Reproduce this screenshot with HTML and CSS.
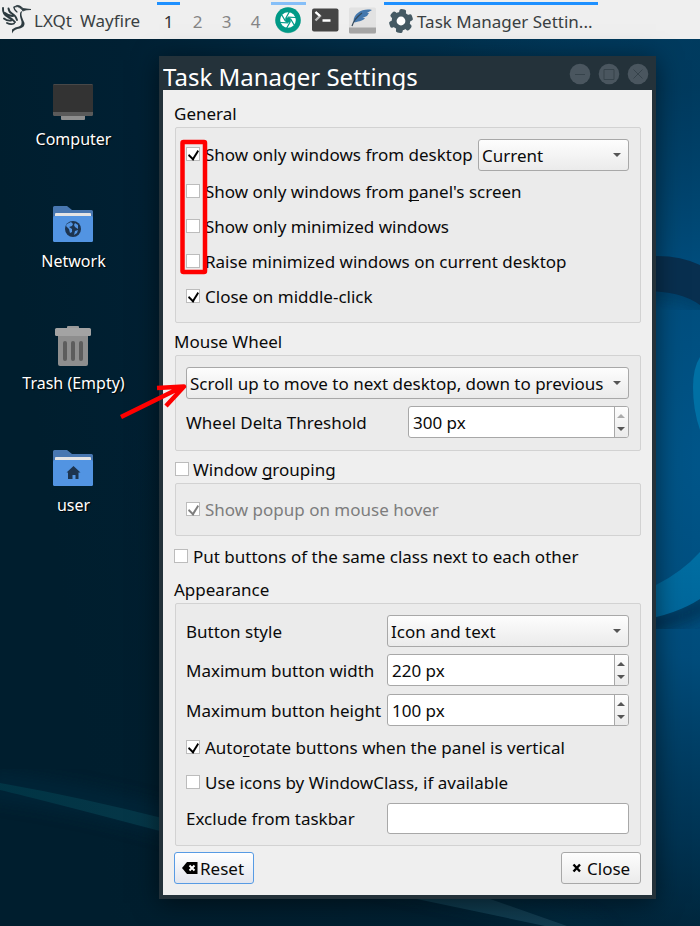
FILE: index.html
```html
<!DOCTYPE html>
<html lang="en">
<head>
<meta charset="utf-8">
<title>Desktop</title>
<link rel="stylesheet" href="styles.css">
</head>
<body>
<svg class="wallpaper" width="700" height="926" viewBox="0 0 700 926">
  <defs>
    <linearGradient id="sky" x1="0" y1="0.2" x2="1" y2="0">
      <stop offset="0" stop-color="#001e2e"/>
      <stop offset="0.2" stop-color="#002033"/>
      <stop offset="0.5" stop-color="#002c46"/>
      <stop offset="1" stop-color="#003c60"/>
    </linearGradient>
    <linearGradient id="floor" x1="0" y1="0" x2="0" y2="1">
      <stop offset="0.45" stop-color="#001e2e" stop-opacity="0"/>
      <stop offset="0.8" stop-color="#001e2e" stop-opacity=".85"/>
    </linearGradient>
    <radialGradient id="glow" gradientUnits="userSpaceOnUse" cx="720" cy="460" r="500">
      <stop offset="0" stop-color="#00568a"/>
      <stop offset="0.4" stop-color="#004c7b"/>
      <stop offset="0.75" stop-color="#003a5e" stop-opacity="0.75"/>
      <stop offset="1" stop-color="#003a5e" stop-opacity="0"/>
    </radialGradient>
    <linearGradient id="swirl" x1="0" y1="0" x2="0" y2="1">
      <stop offset="0" stop-color="#006ea2"/>
      <stop offset="1" stop-color="#00669a"/>
    </linearGradient>
    <linearGradient id="beam" x1="0" y1="0" x2="1" y2="0">
      <stop offset="0" stop-color="#003444"/>
      <stop offset="1" stop-color="#123c50"/>
    </linearGradient>
    <filter id="soft"><feGaussianBlur stdDeviation="8"/></filter>
  </defs>
  <rect width="700" height="926" fill="url(#sky)"/>
  <rect width="700" height="926" fill="url(#floor)"/>
  <rect width="700" height="926" fill="url(#glow)"/>
  <path d="M640 292Q680 290 710 308" fill="none" stroke="#00304f" stroke-width="12" opacity=".6" filter="url(#soft)"/>
  <path d="M640 257Q675 253 700 265V305Q680 290 640 291Z" fill="#082f4f"/>
  <path d="M700 357Q693 368 693 387Q693 410 700 430Z" fill="#0070a4"/>
  <path d="M640 626Q680 620 710 602" fill="none" stroke="#00263f" stroke-width="16" opacity=".7" filter="url(#soft)"/>
  <path d="M700 552Q682 572 656 585L640 592V620Q675 615 700 599Z" fill="url(#swirl)"/>
  <path d="M-10 785Q80 797 170 822T420 882T600 940" fill="none" stroke="#002f45" stroke-width="30" opacity=".4" filter="url(#soft)"/>
  <path d="M0 783Q80 797 170 820T490 899L567 926L545 926L417 899T160 831T0 795Z" fill="url(#beam)"/>
</svg>

<header class="panel">
  <svg class="bird" width="34" height="36" viewBox="0 0 34 36" fill="none" stroke="#2d3b40" stroke-linecap="round" stroke-linejoin="round">
    <path d="M14 7Q17 4 21 6.500L23 8.500L31 9.500Q25 9.500 23 11L21 8.500Q18 5.500 14 7Z" fill="#2d3b40" stroke-width=".8"/>
    <path d="M14 7Q14 10 17 12" stroke-width="1.200"/>
    <path d="M23 10.500Q20.500 12.500 22 17Q23 20 24.500 23Q25 27 20 28.500Q14 29 12 33.500V29.500Q15 27 19 26.500Q22 25.500 21.500 21.500Q19 15 20.500 12Z" fill="#2d3b40" stroke="none"/>
    <path d="M3 8Q2.500 14 8 17Q12 18.500 15 22M5 13Q8 16 13 16M8.500 8.500Q9 12 12 13.500Q16 16 17 20M4 18.500Q7 21 11 20.500M7 23Q11 25 14 23.500" stroke-width="1.900"/>
  </svg>
  <span class="menu">LXQt</span>
  <span class="menu second">Wayfire</span>
  <nav class="desks"><b>1</b><i>2</i><i>3</i><i>4</i></nav>
  <span class="task task-shot">
    <svg width="26" height="28" viewBox="0 0 26 28"><circle cx="13" cy="14.500" r="12.700" fill="#08917f" opacity=".45"/><circle cx="13" cy="14" r="12.700" fill="#009a87"/><circle cx="13" cy="14" r="7.800" fill="#fff"/><circle cx="13" cy="14" r="2.800" fill="#009a87"/><path d="M10.600 12.600L14.500 5.500M13 11.200L21 11.500M15.400 12.600L19.500 19.500M15.400 15.400L11.500 22.500M13 16.800L5 16.500M10.600 15.400L6.500 8.500" stroke="#009a87" stroke-width="1.200"/></svg>
  </span>
  <svg class="launch term" width="27" height="25" viewBox="0 0 27 25"><rect y=".500" width="26.500" height="23" rx="2" fill="#454545"/><path d="M3.500 4l4.500 4-4.500 4.500" fill="none" stroke="#bbb" stroke-width="2.300"/><path d="M3.500 4l4.500 4" stroke="#fff" stroke-width="2.300"/><path d="M10.500 12.500h8" stroke="#fff" stroke-width="2.500"/></svg>
  <svg class="launch" width="27" height="28" viewBox="0 0 27 28"><rect y="1.500" width="27" height="26" rx="1.500" fill="#e2e2e2"/><path d="M0 21.500h27v4.500q0 1.500-1.500 1.500h-24Q0 27.500 0 26z" fill="#a6a6a6"/><path d="M23 4C14 2 5 7 4.500 15L5.500 16.500C11 15 14 15 16 12L13.500 12L18 10L20 7L18 7Z" fill="#4377ad"/><path d="M3 20Q5 13 13 7" fill="none" stroke="#354a5c" stroke-width="1.200"/></svg>
  <span class="task task-active">
    <svg width="26" height="26" viewBox="-13 -13 26 26"><g fill="#455a64"><circle r="9.300"/><rect x="-3.400" y="-12" width="6.800" height="24" rx="2" transform="rotate(10)"/><rect x="-3.400" y="-12" width="6.800" height="24" rx="2" transform="rotate(70)"/><rect x="-3.400" y="-12" width="6.800" height="24" rx="2" transform="rotate(130)"/></g><circle r="4.400" fill="#fff"/></svg>
    <span>Task Manager Settin...</span>
  </span>
</header>

<main class="icons">
  <figure><svg width="40" height="40" viewBox="0 0 40 40"><rect x="8" y="31" width="24" height="5" rx="1" fill="#8e8e8e"/><rect width="40" height="32" rx="1.500" fill="#5a5a5a"/><path d="M0 28V1.500Q0 0 1.500 0h37Q40 0 40 1.500V28z" fill="#333"/><path d="M1 .500h38" stroke="#484848"/></svg><figcaption>Computer</figcaption></figure>
  <figure><svg width="40" height="40" viewBox="0 0 40 40"><path d="M0 10V1.500Q0 0 1.500 0H14l5 4h19.500Q40 4 40 5.500V12H0z" fill="#4877b1"/><rect x="2" y="7" width="36" height="6" rx="1" fill="#e4e4e4"/><rect y="10" width="40" height="26" rx="1.500" fill="#5294e2"/><circle cx="20" cy="23" r="8" fill="#1d344f"/><path d="M14 18l4-2 2 2-1 2-3 1 3 2v3l-2 1-1-4-3-3zM22 17l3 2v4l-3-2-1-2zM22 25l3-1-1 3-3 2z" fill="#5294e2"/></svg><figcaption>Network</figcaption></figure>
  <figure><svg class="trash" width="40" height="40" viewBox="0 0 40 40"><path d="M5 8h30v30q0 2-2 2H7q-2 0-2-2z" fill="#8e8e8e"/><rect x="14" y="0" width="12" height="4" rx="1" fill="#9a9a9a"/><rect x="2" y="2" width="36" height="8" rx="1.500" fill="#a3a3a3"/><path d="M12 17v16M20 17v16M28 17v16" stroke="#5d5d5d" stroke-width="4" stroke-linecap="round"/></svg><figcaption>Trash (Empty)</figcaption></figure>
  <figure><svg width="40" height="40" viewBox="0 0 40 40"><path d="M0 10V1.500Q0 0 1.500 0H14l5 4h19.500Q40 4 40 5.500V12H0z" fill="#4877b1"/><rect x="2" y="7" width="36" height="6" rx="1" fill="#e4e4e4"/><rect y="10" width="40" height="26" rx="1.500" fill="#5294e2"/><path d="M20.500 16l7 6.500h-2V29h-3v-4h-3v4h-4.500v-6.500h-1.500z" fill="#1d344f"/></svg><figcaption>user</figcaption></figure>
</main>

<section class="window">
  <div class="titlebar">
    <h1>Task Manager Settings</h1>
    <svg width="80" height="22" viewBox="0 0 80 22" fill="none" stroke="#36434b" stroke-width="1"><g fill="#4a565f" stroke="none"><circle cx="11" cy="11" r="10.300"/><circle cx="40" cy="11" r="10.300"/><circle cx="69" cy="11" r="10.300"/></g><path d="M6 11.500h10M35 6.500h10v10H35zM64.500 6.500l9 9M73.500 6.500l-9 9"/></svg>
  </div>
  <form class="body">
    <h2>General</h2>
    <div class="group general">
      <div class="row r1"><span class="box on"></span><span class="t">Show only windows from desktop</span><span class="combo">Current</span></div>
      <div class="row r35"><span class="box"></span><span class="t">Show only windows from <u>p</u>anel's screen</span></div>
      <div class="row r35"><span class="box"></span><span class="t">Show only minimized windows</span></div>
      <div class="row r35"><span class="box"></span><span class="t">Raise minimized windows on current desktop</span></div>
      <div class="row r35"><span class="box on"></span><span class="t">Close on middle-click</span></div>
    </div>
    <h2 class="wheel-title">Mouse Wheel</h2>
    <div class="group wheel">
      <span class="combo">Scroll up to move to next desktop, down to previous</span>
      <div class="field short"><span>Wheel Delta Threshold</span><span class="spin max"><span>300 px</span><i></i></span></div>
    </div>
    <div class="check grouping"><span class="box"></span><span class="t">Window <u>g</u>rouping</span></div>
    <div class="group popup"><div class="row off"><span class="box on"></span><span class="t">Show popup on mouse hover</span></div></div>
    <div class="check same"><span class="box"></span><span class="t">Put buttons of the same class next to each other</span></div>
    <h2 class="look-title">Appearance</h2>
    <div class="group look">
      <div class="field"><span>Button style</span><span class="combo">Icon and text</span></div>
      <div class="field f2"><span>Maximum button width</span><span class="spin"><span>220 px</span><i></i></span></div>
      <div class="field f3"><span>Maximum button height</span><span class="spin"><span>100 px</span><i></i></span></div>
      <div class="row auto"><span class="box on"></span><span class="t">Auto<u>r</u>otate buttons when the panel is vertical</span></div>
      <div class="row r35"><span class="box"></span><span class="t">Use icons by WindowClass, if available</span></div>
      <div class="field f4"><span>Exclude from taskbar</span><span class="input"></span></div>
    </div>
    <footer>
      <span class="btn focus"><svg width="16" height="12" viewBox="0 0 16 12"><path d="M5 0h10.500v12H5L0 6z"/><path d="M7.500 3.500l5 5M12.500 3.500l-5 5" stroke="#fff" stroke-width="2"/></svg><span>Reset</span></span>
      <span class="btn close"><svg width="10" height="10" viewBox="0 0 10 10"><path d="M1.500 1.500l6.500 7M8 1.500l-6.500 7" stroke="#000" stroke-width="2.400"/></svg><span>Close</span></span>
    </footer>
  </form>
</section>

<svg class="marks" width="700" height="926" viewBox="0 0 700 926" fill="none" stroke="#f00"><rect x="182.500" y="142" width="22.500" height="130" rx="1" stroke-width="4.500" stroke-linejoin="round"/><path d="M121 417L182 387M157 388L184 386.500L166 406" stroke-width="4.500" stroke-linejoin="round"/></svg>
</body>
</html>
```

FILE: styles.css
```css
* { box-sizing: border-box; }
body {
  margin: 0;
  width: 700px;
  height: 926px;
  overflow: hidden;
  position: relative;
  background: #001f30;
  font: 17px/24px "Noto Sans", sans-serif;
  color: #0a0a0a;
}
svg { display: block; flex: none; }
h1, h2, figure { margin: 0; font-weight: 400; }
.wallpaper, .marks { position: absolute; left: 0; top: 0; }

.panel {
  position: relative;
  display: flex;
  height: 39px;
  background: #efefef;
  color: #3a3f42;
  font-size: 17px;
  line-height: 42px;
  white-space: nowrap;
}
.bird { width: 34px; }
.menu { width: 46px; }
.menu.second { width: 76px; }
.desks { display: flex; }
.desks b, .desks i {
  width: 23px;
  margin: 2px 6px 0 0;
  font-weight: 400;
  font-style: normal;
  text-align: center;
  color: #858585;
}
.desks b { margin-left: 1px; border-top: 3px solid #1e90ff; line-height: 34px; color: #333; }
.desks i { padding-top: 3px; line-height: 34px; }
.desks i:last-child { margin-right: 0; }
.task { display: flex; margin-top: 2px; border-top: 3px solid #1e90ff; }
.task-shot { width: 35px; margin-left: 4px; padding: 1px 0 0 4px; border-color: #86bff8; }
.launch { margin: 6px 0 0 10px; }
.launch.term { margin: 8px 0 0 6px; }
.task-active { width: 214px; margin-left: 8px; padding-left: 4px; align-items: center; line-height: 34px; }
.task-active svg { margin-top: -2px; }
.task-active span { margin-left: 3px; }

.icons { position: relative; width: 147px; padding-top: 45px; color: #fff; font-size: 16px; text-align: center; }
figure { height: 122px; }
figure svg { margin: 0 0 0 53px; }
.trash { position: relative; top: -2px; }
figcaption { margin-top: 3px; text-shadow: 1px 1px 1px #000; }

.window {
  position: absolute;
  left: 159px;
  top: 56px;
  width: 497px;
  height: 843px;
  padding: 0 4px 4px;
  background: #24323a;
  box-shadow: 0 4px 24px rgba(0, 0, 0, .5);
}
.titlebar { display: flex; justify-content: space-between; height: 34px; overflow: hidden; }
.titlebar h1 { font-size: 24px; line-height: 41px; color: #fff; }
.titlebar svg { margin: 7px 3px 0 0; }
.body { height: 805px; padding: 12px 11px 0; background: #efefef; white-space: nowrap; }
h2 { height: 24px; font-size: 17px; line-height: 24px; }
.group { margin: 1px 0 0 1px; padding: 11px 11px 0 10px; background: #ebebeb; border: 1px solid #d2d2d2; border-radius: 2px; }
.general { height: 196px; }
.row, .check { display: flex; align-items: center; }
.row { height: 35px; }
.row.r1 { height: 35px; align-items: flex-start; }
.r1 .box { margin-top: 8px; }
.r1 .t { margin-top: 4px; width: 273px; }
.r1 .combo { flex: 1; }
.t { margin-left: 5px; }
.box { position: relative; width: 14px; height: 14px; flex: none; background: #fff; border: 1px solid #bcbcbc; top: -1px; }
.r1 .box { top: 0; }
.on::after {
  content: "";
  position: absolute;
  left: 3px;
  top: 0;
  width: 5px;
  height: 9px;
  border: solid #000;
  border-width: 0 2px 2px 0;
  transform: rotate(32deg) skewY(12deg);
}
u { text-decoration-thickness: 1px; text-underline-offset: 2px; text-decoration-skip-ink: none; }
.combo, .btn {
  position: relative;
  display: block;
  height: 32px;
  padding-left: 3px;
  border: 1px solid #a8a8a8;
  border-radius: 3px;
  background: linear-gradient(#fdfdfd, #ebebeb);
  line-height: 32px;
}
.combo::after {
  content: "";
  position: absolute;
  right: 7px;
  top: 13px;
  border: solid transparent;
  border-width: 4px 4px 0;
  border-top-color: #555;
}
.wheel-title { margin-top: 7px; }
.wheel { height: 96px; }
.field { display: flex; height: 32px; align-items: center; }
.field > :first-child { width: 201px; padding-top: 2px; }
.field > :last-child { flex: 1; }
.field.short > :first-child { width: 222px; }
.short { margin-top: 7px; }
.spin, .input { height: 32px; background: #fff; border: 1px solid #a8a8a8; border-radius: 3px; line-height: 32px; }
.input { height: 31px; }
.spin { display: flex; justify-content: space-between; padding-left: 4px; }
.spin i { position: relative; width: 14px; border-left: 1px solid #a8a8a8; background: linear-gradient(#fdfdfd, #ebebeb); border-radius: 0 2px 2px 0; }
.spin i::before, .spin i::after { content: ""; position: absolute; left: 2px; border: solid transparent; }
.spin i::before { top: 7px; border-width: 0 4px 4px; border-bottom-color: #555; }
.spin i::after { bottom: 6px; border-width: 4px 4px 0; border-top-color: #555; }
.spin.max i::before { border-bottom-color: #aaa; }
.grouping { height: 24px; margin: 7px 0 0 1px; }
.check .t { margin-left: 4px; }
.popup { height: 53px; padding-top: 8px; }
.off { color: #7d7d7d; }
.off .on::after { border-color: #7d7d7d; }
.same { height: 24px; margin-top: 9px; }
.same .t { margin-left: 5px; }
.look-title { margin-top: 9px; }
.look { height: 243px; }
.f2 { margin-top: 7px; }
.f3 { margin-top: 8px; }
.auto { margin-top: 4px; }
.f4 { margin-top: 2px; }
footer { display: flex; justify-content: space-between; margin-top: 6px; }
.btn { display: flex; width: 80px; padding-left: 7px; }
.btn svg { margin: 9px 2px 0 0; }
.focus { border-color: #579be4; background: linear-gradient(#fff, #e3e6ee); }
.close { padding-left: 10px; }
.close svg { margin: 10px 5px 0 0; }
```
